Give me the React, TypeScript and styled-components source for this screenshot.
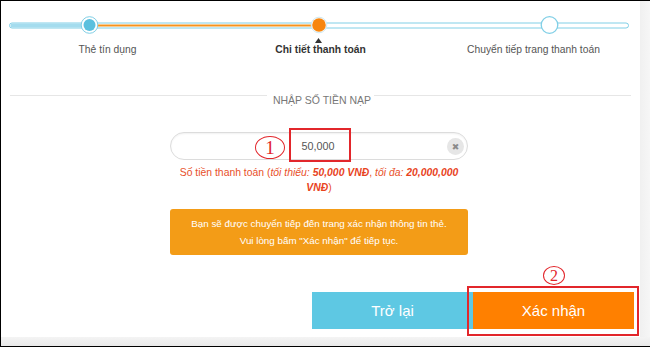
import React from "react";
import styled, { createGlobalStyle } from "styled-components";

const Global = createGlobalStyle`
  html, body { margin: 0; padding: 0; background: #fff; }
  body { font-family: "Liberation Sans", Arial, sans-serif; }
  * { box-sizing: border-box; }
`;

const Frame = styled.div`
  width: 650px;
  height: 347px;
  border-top: 1px solid #000;
  border-left: 1px solid #000;
  border-bottom: 1px solid #000;
  display: flex;
  flex-direction: column;
  overflow: hidden;
`;

const Main = styled.div`
  display: flex;
  flex: 1;
`;

const Panel = styled.div`
  width: 639px;
  background: #fff;
  display: flex;
  flex-direction: column;
  position: relative;
`;

const RightShade = styled.div`
  flex: 1;
  background: linear-gradient(to right, #f0f0f0, #f6f6f6);
`;

const BottomStrip = styled.div`
  height: 9px;
  background: linear-gradient(to bottom, #f4f4f4, #e9e9e9);
`;

const Stepper = styled.div`
  padding-top: 14px;
`;

const TrackSvg = styled.svg`
  display: block;
`;

const Labels = styled.div`
  display: grid;
  grid-template-columns: repeat(3, 213px);
`;

const StepLabel = styled.div<{ $active?: boolean }>`
  text-align: center;
  font-size: 10.3px;
  line-height: 14px;
  color: ${(p) => (p.$active ? "#333" : "#555")};
  font-weight: ${(p) => (p.$active ? "bold" : "normal")};
`;

const LegendRow = styled.div`
  margin-top: 38px;
  display: flex;
  align-items: flex-start;
  padding: 0 9px;
`;

const LegendLine = styled.div`
  flex: 1;
  height: 1px;
  background: #e6e6e6;
`;

const LegendText = styled.div`
  margin-top: -1px;
  padding: 0 3px 0 6px;
  font-size: 10.5px;
  line-height: 12px;
  color: #777;
  text-transform: uppercase;
`;

const Body = styled.div`
  display: flex;
  flex-direction: column;
  align-items: center;
  padding-right: 3px;
`;

const Form = styled.div`
  width: 298px;
  display: flex;
  flex-direction: column;
`;

const InputWrap = styled.div`
  position: relative;
  margin-top: 26px;
  height: 28px;
  border: 1px solid #dcdcdc;
  border-radius: 14px;
  background: #fff;
  box-shadow: inset 0 1px 2px rgba(0, 0, 0, 0.06);
  display: flex;
  align-items: center;
  justify-content: center;
`;

const AmountValue = styled.span`
  font-size: 10.8px;
  color: #555;
  margin-right: 2px;
`;

const ClearButton = styled.span`
  position: absolute;
  right: 3px;
  top: 5px;
  width: 17px;
  height: 17px;
  border-radius: 50%;
  background: #e6e6e6;
  color: #8a8a8a;
  font-size: 9px;
  display: flex;
  align-items: center;
  justify-content: center;
  font-family: "DejaVu Sans", sans-serif;
`;

const RedBox = styled.div<{ $l: number; $t: number; $w: number; $h: number }>`
  position: absolute;
  left: ${(p) => p.$l}px;
  top: ${(p) => p.$t}px;
  width: ${(p) => p.$w}px;
  height: ${(p) => p.$h}px;
  border: 2px solid #e2262b;
  pointer-events: none;
`;

const Marker = styled.div<{ $l: number; $t: number; $w: number; $h: number; $fs: number }>`
  position: absolute;
  left: ${(p) => p.$l}px;
  top: ${(p) => p.$t}px;
  width: ${(p) => p.$w}px;
  height: ${(p) => p.$h}px;
  border: 1px solid #e2262b;
  border-radius: 50%;
  color: #e2262b;
  font-family: "Liberation Serif", serif;
  font-size: ${(p) => p.$fs}px;
  line-height: 1;
  display: flex;
  align-items: center;
  justify-content: center;
`;

const Hint = styled.div`
  margin-top: 5px;
  font-size: 10.4px;
  line-height: 15px;
  color: #e8502a;
  text-align: center;
  i { font-style: italic; }
  b { font-weight: bold; font-style: italic; color: #e8431d; }
`;

const Notice = styled.div`
  margin-top: 14px;
  height: 46px;
  background: #f39c17;
  border-radius: 3px;
  color: #fff;
  font-size: 9.8px;
  line-height: 17px;
  text-align: center;
  padding-top: 6px;
`;

const Actions = styled.div`
  margin-top: 37px;
  display: flex;
  justify-content: flex-end;
  padding-right: 6px;
`;

const Button = styled.div<{ $variant: "back" | "confirm" }>`
  position: relative;
  width: 161px;
  height: 37px;
  display: flex;
  align-items: center;
  justify-content: center;
  color: #fff;
  font-size: 15px;
  background: ${(p) => (p.$variant === "back" ? "#5ec8e3" : "#ff8000")};
`;

const TRACK = "#80cfe6";

export default function App() {
  return (
    <>
      <Global />
      <Frame>
        <Main>
          <Panel>
            <Stepper>
              <TrackSvg width={639} height={28} viewBox="0 0 639 28">
                <rect x={8.5} y={8} width={619} height={5} rx={2.5} fill="#fff" stroke={TRACK} />
                <rect x={9.5} y={8.5} width={80} height={4} rx={2} fill="#a4dcee" />
                <rect x={88} y={9.5} width={230} height={2} fill="#f7941d" />
                <circle cx={88.5} cy={10} r={8.3} fill="#fff" stroke={TRACK} />
                <circle cx={88.5} cy={10} r={6} fill="#5bc0de" />
                <circle cx={318} cy={10} r={7.8} fill="#fff" stroke="#cfe9f2" />
                <circle cx={318} cy={10} r={6.8} fill="#f7860f" />
                <circle cx={548.5} cy={10} r={8.3} fill="#fff" stroke={TRACK} strokeWidth={1.3} />
                <polygon points="317.5,23 321,28 314,28" fill="#333" />
              </TrackSvg>
              <Labels>
                <StepLabel>Thẻ tín dụng</StepLabel>
                <StepLabel $active>Chi tiết thanh toán</StepLabel>
                <StepLabel>Chuyển tiếp trang thanh toán</StepLabel>
              </Labels>
            </Stepper>

            <LegendRow>
              <LegendLine />
              <LegendText>Nhập số tiền nạp</LegendText>
              <LegendLine />
            </LegendRow>

            <Body>
              <Form>
                <InputWrap>
                  <AmountValue>50,000</AmountValue>
                  <ClearButton>✖</ClearButton>
                  <RedBox $l={118} $t={-5} $w={62} $h={34} />
                  <Marker $l={84} $t={3} $w={30} $h={23} $fs={19}>1</Marker>
                </InputWrap>
                <Hint>
                  Số tiền thanh toán (<i>tối thiểu: </i><b>50,000 VNĐ</b>, <i>tối đa: </i>
                  <b>20,000,000</b> <b>VNĐ</b>)
                </Hint>
                <Notice>
                  Bạn sẽ được chuyển tiếp đến trang xác nhận thông tin thẻ.
                  <br />
                  Vui lòng bấm "Xác nhận" để tiếp tục.
                </Notice>
              </Form>
            </Body>

            <Actions>
              <Button $variant="back">Trở lại</Button>
              <Button $variant="confirm">
                Xác nhận
                <RedBox $l={-6} $t={-6} $w={172} $h={50} />
                <Marker $l={70} $t={-26} $w={22} $h={19} $fs={16}>2</Marker>
              </Button>
            </Actions>
          </Panel>
          <RightShade />
        </Main>
        <BottomStrip />
      </Frame>
    </>
  );
}
